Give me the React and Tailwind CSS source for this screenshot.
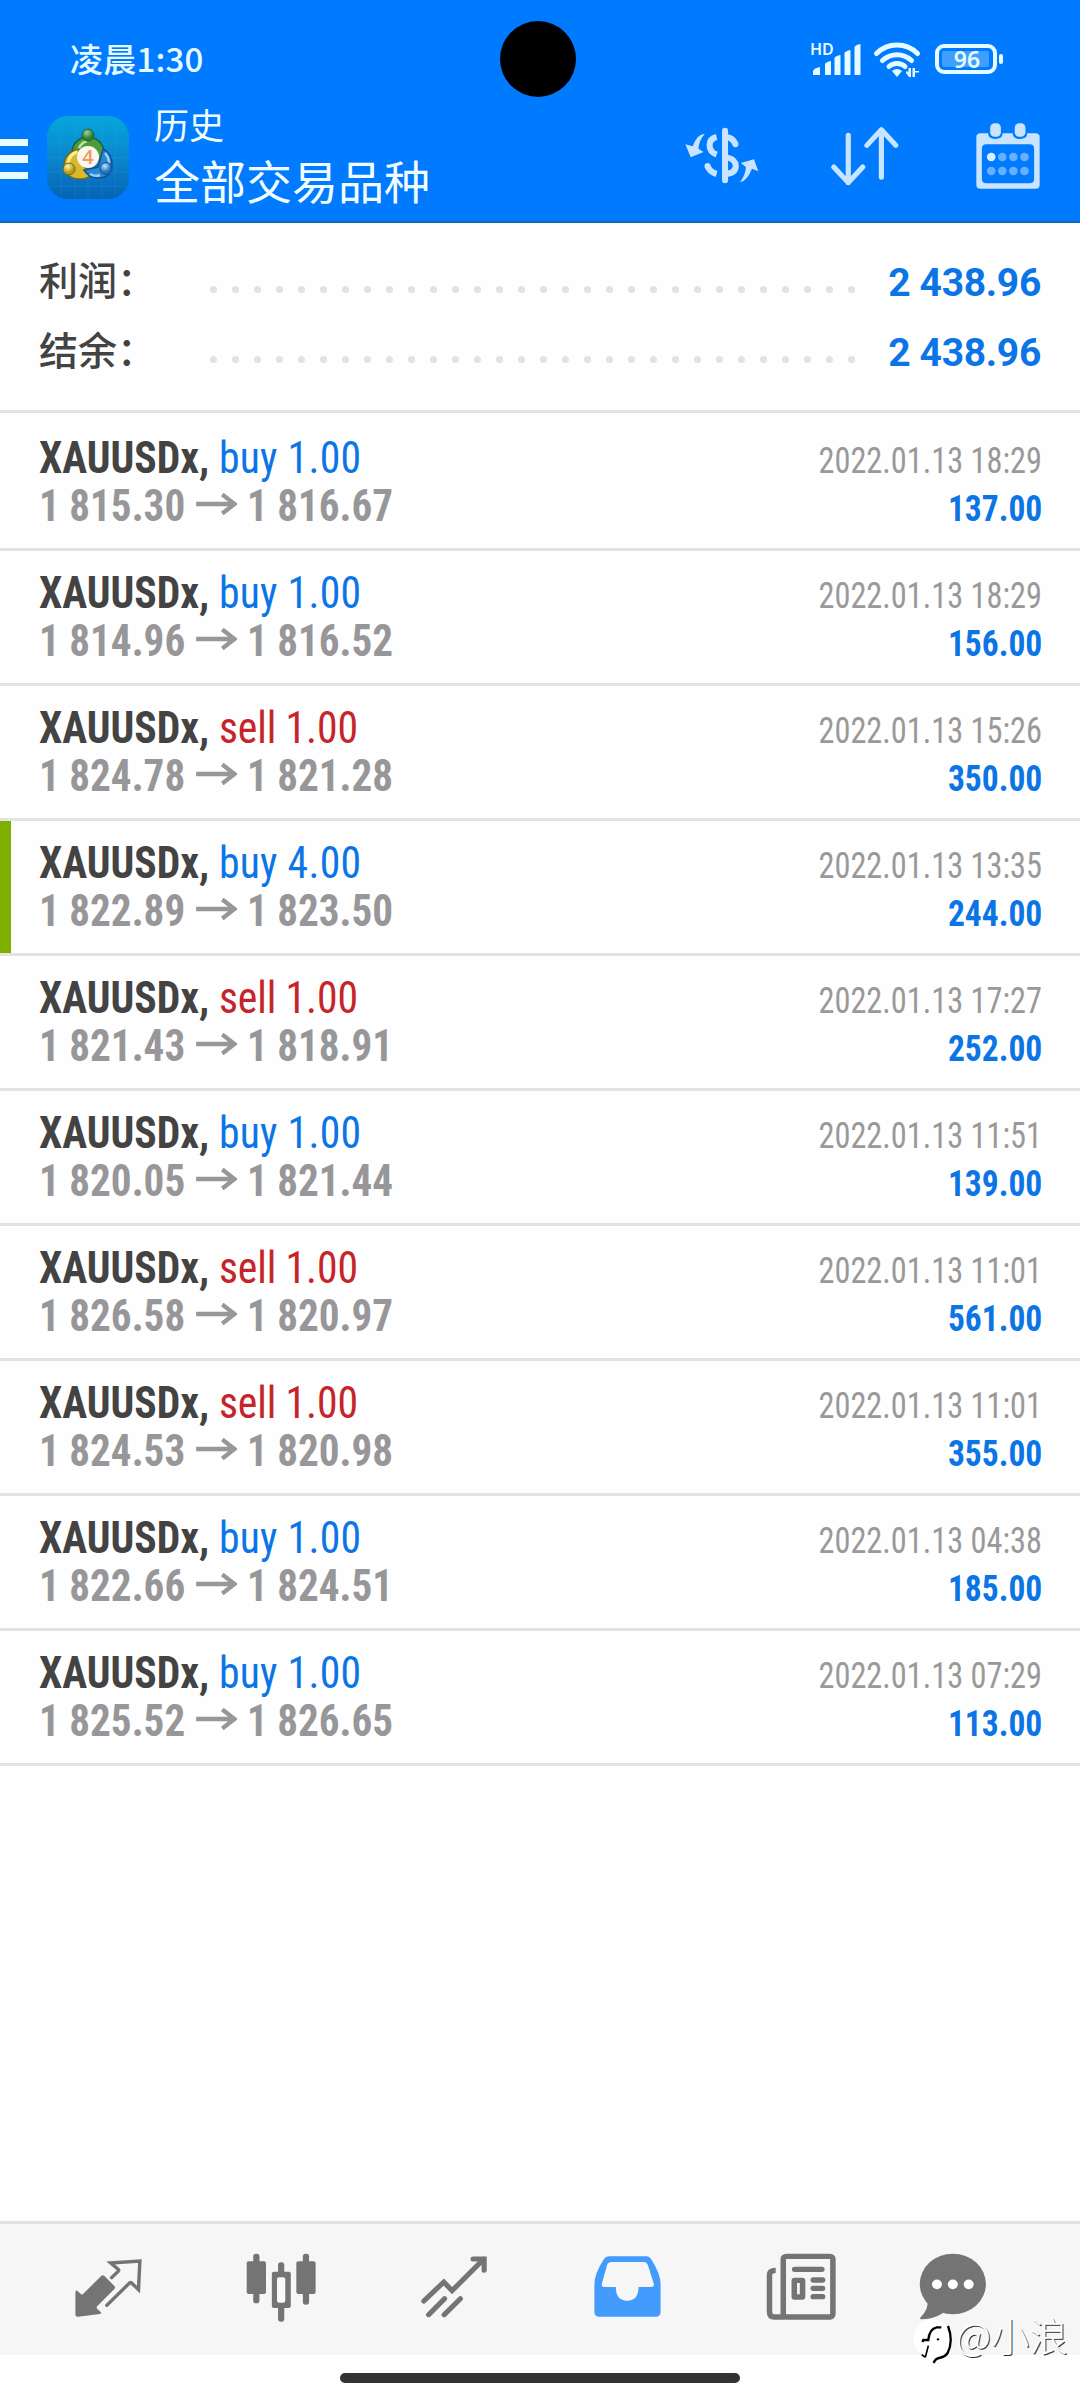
import React from 'react'

const deals = [
  { side: 'buy', volume: '1.00', open: '1 815.30', close: '1 816.67', time: '2022.01.13 18:29', profit: '137.00' },
  { side: 'buy', volume: '1.00', open: '1 814.96', close: '1 816.52', time: '2022.01.13 18:29', profit: '156.00' },
  { side: 'sell', volume: '1.00', open: '1 824.78', close: '1 821.28', time: '2022.01.13 15:26', profit: '350.00' },
  { side: 'buy', volume: '4.00', open: '1 822.89', close: '1 823.50', time: '2022.01.13 13:35', profit: '244.00', marked: true },
  { side: 'sell', volume: '1.00', open: '1 821.43', close: '1 818.91', time: '2022.01.13 17:27', profit: '252.00' },
  { side: 'buy', volume: '1.00', open: '1 820.05', close: '1 821.44', time: '2022.01.13 11:51', profit: '139.00' },
  { side: 'sell', volume: '1.00', open: '1 826.58', close: '1 820.97', time: '2022.01.13 11:01', profit: '561.00' },
  { side: 'sell', volume: '1.00', open: '1 824.53', close: '1 820.98', time: '2022.01.13 11:01', profit: '355.00' },
  { side: 'buy', volume: '1.00', open: '1 822.66', close: '1 824.51', time: '2022.01.13 04:38', profit: '185.00' },
  { side: 'buy', volume: '1.00', open: '1 825.52', close: '1 826.65', time: '2022.01.13 07:29', profit: '113.00' },
]

function StatusBar() {
  return (
    <div className="relative flex h-[118px] items-center justify-between pl-[70px] pr-[77px] text-[#e6fbff]">
      <span className="mt-[-2px] font-['Noto_Sans_CJK_SC',sans-serif] text-[33px] font-medium leading-none tracking-[0.2px]">凌晨1:30</span>
      <div className="absolute left-[500px] top-[21px] h-[76px] w-[76px] rounded-full bg-black" />
      <svg className="mt-[1px] h-[38px] w-[193px] overflow-visible" viewBox="810 41 193 38" fill="currentColor">
        <text x="810" y="55" fontSize="16" fontWeight="600" fontFamily="'Noto Sans', sans-serif">HD</text>
        <path d="M813 75v-4q1-3 7-4v8zM825 75V64q1-2 6-3v14zM834.500 75V58q1-2 6-3v20zM844.500 75V53q1-2 6-3v25zM854.500 75V47q1-2 6-3v31z" />
        <g fill="none" stroke="currentColor" strokeWidth="5" strokeLinecap="round">
          <path d="M876.500 53.500a29 29 0 0 1 41 0" />
          <path d="M882.500 60.500a21 21 0 0 1 29 0" />
          <path d="M889 66.500a12 12 0 0 1 16 0" />
        </g>
        <path d="M892 71q5-4 10 0l-5 6z" />
        <path d="M906 71.500h2.500V68h2.500v9h-2l-3-4zM912.500 68h2.500v3h4v1.500h-4V77h-2.500z" />
        <rect x="937" y="46" width="58" height="26" rx="7" fill="none" stroke="currentColor" strokeWidth="4" />
        <rect x="942" y="51" width="47" height="16" rx="2" opacity=".28" />
        <rect x="999" y="54" width="4" height="10" rx="2" />
        <text x="967" y="68" fontSize="23" fontWeight="600" textAnchor="middle" fontFamily="'Noto Sans', sans-serif">96</text>
      </svg>
    </div>
  )
}

function AppLogo() {
  return (
    <svg className="ml-[19px] mt-[-2px] h-[83px] w-[82px]" viewBox="0 0 82 83">
      <defs>
        <linearGradient id="tile" x1="0" y1="0" x2="0" y2="1">
          <stop offset="0" stopColor="#06a6dc" />
          <stop offset=".5" stopColor="#0a86cf" />
          <stop offset="1" stopColor="#0663b4" />
        </linearGradient>
        <radialGradient id="green" cx=".4" cy=".3">
          <stop offset="0" stopColor="#9bd68a" />
          <stop offset="1" stopColor="#2e7d3a" />
        </radialGradient>
        <radialGradient id="gold" cx=".4" cy=".3">
          <stop offset="0" stopColor="#fff3a0" />
          <stop offset="1" stopColor="#b8981c" />
        </radialGradient>
        <radialGradient id="sky" cx=".4" cy=".3">
          <stop offset="0" stopColor="#bfe6ff" />
          <stop offset="1" stopColor="#1c6fc0" />
        </radialGradient>
      </defs>
      <rect width="82" height="83" rx="21" fill="url(#tile)" />
      <path d="M14 3v77M28 1v81M41 1v81M55 1v81M68 3v77M3 14h76M1 28h80M1 42h80M1 56h80M3 70h76" stroke="#35b5e6" strokeWidth=".7" opacity=".25" />
      <path d="M27 45a16 16 0 0 1 28-16q4 7 1 15l-15-2z" fill="#4c9c3c" stroke="#1f5f3c" strokeWidth="1.500" />
      <path d="M31 37a12 12 0 0 1 9-12" fill="none" stroke="#b9e29a" strokeWidth="2.500" />
      <path d="M32 33q-15 3-15 18 2 12 17 12 6 0 10-4L33 45z" fill="#d9b92c" stroke="#6f6a1c" strokeWidth="1.500" />
      <path d="M21 47q2-9 9-11" fill="none" stroke="#fff08a" strokeWidth="3" />
      <path d="M56 33q9 5 9 16 0 13-14 13-9 0-14-8l14-3z" fill="#2b87cf" stroke="#155091" strokeWidth="1.500" />
      <path d="M58 37q4 4 4 10M43 58q5 3 10 1" fill="none" stroke="#8ed0f8" strokeWidth="2.500" />
      <circle cx="41" cy="19" r="6" fill="url(#green)" stroke="#1f5f3c" />
      <circle cx="22" cy="53" r="6" fill="url(#gold)" stroke="#6f6a1c" />
      <circle cx="59" cy="52.500" r="6" fill="url(#sky)" stroke="#155091" />
      <circle cx="41" cy="41" r="11" fill="#fbf6f2" />
      <text x="41" y="48" fontSize="20" fontWeight="600" textAnchor="middle" fill="#f09a5c" fontFamily="'Open Sans', sans-serif">4</text>
    </svg>
  )
}

function ExchangeIcon() {
  return (
    <svg className="mt-[-5px] h-[57px] w-[74px]" viewBox="31 27 220 171" preserveAspectRatio="none" fill="none" stroke="#c8e4ff" strokeWidth="18">
      <path d="M150 38v149" strokeLinecap="round" />
      <path d="M125 57q-21 5-21 25 0 20 21 28M98 144q6 18 27 24" />
      <path d="M98 144v1M181 78v1" strokeLinecap="round" />
      <path d="M154 57q20 3 27 21M154 118q28 5 28 26 0 20-28 24" />
      <path d="M90 47q-24 1-36 38l-22-6 16 39 38-16-15-10q1-24 19-45zM194 193q22-4 36-41l19 8-13-36-39 11 15 12q-1 25-18 46z" fill="#c8e4ff" stroke="none" />
    </svg>
  )
}

function SortIcon() {
  return (
    <svg className="mt-[-4px] h-[60px] w-[70px]" viewBox="843 379 203 180" preserveAspectRatio="none" fill="none" stroke="#c8e4ff" strokeWidth="15" strokeLinecap="round" strokeLinejoin="round">
      <path d="M896 407v142M854 502l42 47 42-47" />
      <path d="M992 533V390M950 437l42-47 42 47" />
    </svg>
  )
}

function CalendarIcon() {
  return (
    <svg className="mt-[-5px] h-[66px] w-[64px]" viewBox="1268 368 185 198" preserveAspectRatio="none">
      <path fillRule="evenodd" fill="#c8e4ff" d="M1281 399h22q0 17 21 17t21-17h29q0 17 21 17t21-17h24q12 0 12 12v142q0 12-12 12h-159q-12 0-12-12V411q0-12 12-12zM1298 432q-13 0-13 13v91q0 13 13 13h125q13 0 13-13v-91q0-13-13-13z" />
      <rect x="1309" y="369" width="31" height="40" rx="13" fill="#c8e4ff" />
      <rect x="1380" y="369" width="31" height="40" rx="13" fill="#c8e4ff" />
      <circle cx="1312" cy="470" r="12.500" fill="#d9f1ff" />
      <g fill="#66b0ff">
        <circle cx="1344" cy="470" r="12.500" />
        <circle cx="1376" cy="470" r="12.500" />
        <circle cx="1408" cy="470" r="12.500" />
        <circle cx="1312" cy="512" r="12.500" />
        <circle cx="1344" cy="512" r="12.500" />
        <circle cx="1376" cy="512" r="12.500" />
        <circle cx="1408" cy="512" r="12.500" />
      </g>
    </svg>
  )
}

function Header() {
  return (
    <header className="h-[223px] border-b-2 border-[#1767b8] bg-[#007aff]">
      <StatusBar />
      <div className="flex h-[80px] items-center">
        <div className="mt-[2px] flex flex-col gap-[9px]">
          <div className="h-[7.500px] w-[28px] bg-[#e8fbff]" />
          <div className="h-[7.500px] w-[28px] bg-[#e8fbff]" />
          <div className="h-[7.500px] w-[28px] bg-[#e8fbff]" />
        </div>
        <AppLogo />
        <div className="ml-[25px] mt-[-13px] flex-1 font-['Noto_Sans_CJK_SC',sans-serif] text-[#f2fdff]">
          <div className="text-[35px] leading-[56px]">历史</div>
          <div className="text-[46px] leading-[55px]">全部交易品种</div>
        </div>
        <div className="flex items-center pr-[40px]">
          <ExchangeIcon />
          <div className="ml-[71px]"><SortIcon /></div>
          <div className="ml-[76px]"><CalendarIcon /></div>
        </div>
      </div>
    </header>
  )
}

function SummaryRow({ label, value }) {
  return (
    <div className="flex h-[70px] items-center pl-[39px] pr-[39px]">
      <span className="mt-[-5px] w-[171px] font-['Noto_Sans_CJK_SC',sans-serif] text-[39px] font-medium leading-none text-[#434343]">{label}</span>
      <div className="mt-[17px] flex gap-[15px]">
        {Array.from({ length: 30 }, (_, i) => (
          <span key={i} className="h-[7px] w-[7px] rounded-full bg-[#e2e2e2]" />
        ))}
      </div>
      <span className="ml-auto mt-[4px] whitespace-nowrap font-['Roboto',sans-serif] text-[39px] font-bold leading-none tracking-[-0.3px] text-[#0c75e6]">{value}</span>
    </div>
  )
}

function DealRow({ deal }) {
  return (
    <li className="flex h-[135px] border-b-[3px] border-[#e3e3e3]">
      <div className={deal.marked ? 'w-[11px] bg-[#7fb000]' : 'w-[11px]'} />
      <div className="flex-1 pl-[28px] pr-[38px] pt-[18px] leading-[48px]">
        <div className="flex h-[48px] items-baseline justify-between">
          <div className="origin-left scale-x-[0.946] text-[44px]">
            <span className="font-bold text-[#434343]">XAUUSDx, </span>
            <span className={deal.side === 'buy' ? 'tracking-[0.3px] text-[#0c75e6]' : 'tracking-[-0.1px] text-[#c5242a]'}>{deal.side} {deal.volume}</span>
          </div>
          <div className="origin-right scale-x-[0.873] text-[37px] text-[#999999]">{deal.time}</div>
        </div>
        <div className="flex h-[48px] items-baseline justify-between">
          <div className="origin-left scale-x-[0.935] text-[44px] font-bold text-[#979799]">
            {deal.open}
            <svg className="ml-[12px] mr-[10px] inline-block h-[22px] w-[44px] align-[6px]" viewBox="0 0 44 22" fill="none" stroke="currentColor" strokeWidth="4.500">
              <path d="M0 11h41M28 1.500L41 11 28 20.500" />
            </svg>
            {deal.close}
          </div>
          <div className="origin-right scale-x-[0.905] text-[37px] font-bold text-[#0c75e6]">{deal.profit}</div>
        </div>
      </div>
    </li>
  )
}

function BottomNav() {
  const tab = 'h-[131px] w-[173px]'
  return (
    <nav className="flex h-[134px] border-t-[3px] border-[#e0e0e0] bg-[#f6f6f6] pl-[22px]">
      {/* quotes */}
      <svg className={tab} viewBox="64 73 502 393" preserveAspectRatio="none" fill="#747474">
        <path d="M298 227q3 0 6 3l28 29q4 5 0 9l-50 52q-3 3 0 7l11 11q2 4-3 5l-63 8q-8 1-8-6v-68q1-7 6-3l10 9q3 3 6 0l52-53q3-3 5-3z" />
        <path d="M324 234l19-19q3-3 0-6l-22-19 85-6-4 86-20-20q-3-3-6 0l-66 67" fill="none" stroke="#747474" strokeWidth="10" strokeLinecap="round" />
      </svg>
      {/* charts */}
      <svg className={tab} viewBox="566 73 502 393" preserveAspectRatio="none" fill="#747474">
        <rect x="735" y="162" width="18" height="149" rx="8" />
        <rect x="716" y="185" width="56" height="98" rx="6" />
        <rect x="879" y="162" width="18" height="153" rx="8" />
        <rect x="860" y="185" width="56" height="98" rx="6" />
        <rect x="807" y="188" width="18" height="178" rx="8" />
        <rect x="789" y="216" width="55" height="109" rx="6" />
        <rect x="804" y="233" width="24" height="76" rx="6" fill="#f8f8f8" />
      </svg>
      {/* trade */}
      <svg className={tab} viewBox="1069 73 502 393" preserveAspectRatio="none" fill="none" stroke="#747474" strokeWidth="15" strokeLinecap="round">
        <path d="M1231 304l58-57 24 26 92-95M1374 178h32v34M1245 345l46-48M1290 345l47-48" />
      </svg>
      {/* history */}
      <svg className={tab} viewBox="3 73 502 393" preserveAspectRatio="none" fill="#439bfe">
        <path fillRule="evenodd" d="M202 170h106q9 0 14 7 28 45 28 76v83q0 15-14 15H172q-14 0-14-15v-83q0-31 28-76 6-7 16-7zM208 187q-10 0-13 8l-15 56q-3 11 6 11h34q0 41 33 41t33-41h37q10 0 7-11l-17-55q-3-9-13-9z" />
      </svg>
      {/* news */}
      <svg className={tab} viewBox="505 73 502 393" preserveAspectRatio="none" fill="none" stroke="#747474" strokeWidth="16">
        <rect x="706" y="170" width="144" height="182" rx="8" />
        <path d="M710 352h-30q-14 0-14-16V226q0-14 18-14" />
        <path d="M739 209h79M793 241h27M793 266h27M793 291h27" strokeLinecap="round" />
        <rect x="738" y="242" width="24" height="50" rx="1" />
      </svg>
      {/* chat */}
      <svg className="h-[131px] w-[132px]" viewBox="1008 73 383 393" preserveAspectRatio="none" fill="#747474">
        <ellipse cx="1199" cy="253" rx="96" ry="91" />
        <path d="M1126 300q4 27-22 55-2 4 4 4 33 0 63-19z" />
        <g fill="#ffffff">
          <circle cx="1153" cy="254" r="14.500" />
          <circle cx="1199" cy="254" r="14.500" />
          <circle cx="1245" cy="254" r="14.500" />
        </g>
      </svg>
    </nav>
  )
}

function Watermark() {
  return (
    <div className="absolute left-[913px] top-[2314px] flex items-center">
      <svg className="h-[50px] w-[43px]" viewBox="24 12 129 150" fill="none" stroke="#000000">
        <ellipse cx="81" cy="84" rx="56" ry="56" fill="#ffffff" stroke="none" />
        <path d="M129 48q17 45-1 81-8 12-26 15-11 2-16 15" fill="none" strokeWidth="7" />
        <path d="M52 96l3-6h15q3-34 25-38h14" strokeWidth="7" />
        <path d="M70 107l-9 35M50 134l10 7" strokeWidth="5" />
        <circle cx="99" cy="88" r="3.500" fill="#000000" stroke="none" />
      </svg>
      <span className="mt-[-9px] font-['Noto_Sans_CJK_SC',sans-serif] text-[38.500px] font-light leading-none text-white [text-shadow:1px_1px_0.5px_#333333]">@小浪</span>
    </div>
  )
}

export default function App() {
  return (
    <div className="relative flex h-[2400px] w-[1080px] flex-col overflow-hidden bg-[#fefefe]">
      <Header />
      <section className="h-[190px] border-b-[3px] border-[#e3e3e3] pt-[23px]">
        <SummaryRow label="利润：" value="2 438.96" />
        <SummaryRow label="结余：" value="2 438.96" />
      </section>
      <ul className="flex-1 pt-[3px] font-['Roboto_Condensed','Roboto',sans-serif] [font-stretch:75%]">
        {deals.map((deal, i) => <DealRow key={i} deal={deal} />)}
      </ul>
      <BottomNav />
      <div className="flex h-[45px] justify-center bg-[#fefefe] pt-[18px]">
        <div className="h-[10px] w-[400px] rounded-full bg-[#333333]" />
      </div>
      <Watermark />
    </div>
  )
}
